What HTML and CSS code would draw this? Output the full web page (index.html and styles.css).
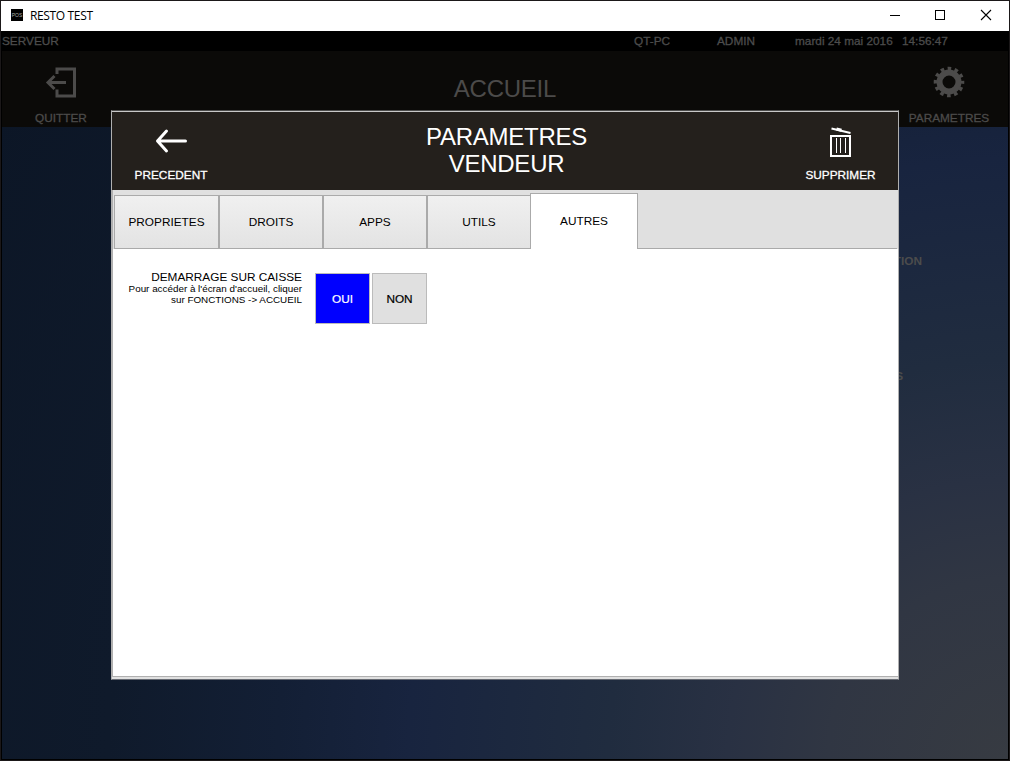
FILE: index.html
```html
<!DOCTYPE html>
<html lang="fr">
<head>
    <meta charset="UTF-8">
    <title>RESTO TEST</title>
    <link rel="stylesheet" href="styles.css">
</head>
<body>
<div class="window">
    <div class="titlebar">
        <div class="app-icon">POS</div>
        <div class="app-title">RESTO TEST</div>
        <svg class="controls" width="110" height="30" viewBox="0 0 110 30" fill="none" stroke="#000" shape-rendering="crispEdges">
            <path d="M0 14.5h10M45.5 9.5h9v9h-9z"/>
            <path d="M91 9l10 10M101 9l-10 10" shape-rendering="auto" stroke-width="1.1"/>
        </svg>
    </div>
    <div class="screen">
        <div class="statusbar">
            <span class="user">SERVEUR</span>
            <span class="host">QT-PC</span>
            <span class="role">ADMIN</span>
            <span class="date">mardi 24 mai 2016</span>
            <span class="time">14:56:47</span>
        </div>
        <div class="header">
            <div class="action">
                <svg width="32" height="32" viewBox="0 0 32 32" fill="none" stroke="#4c4b4a">
                    <path d="M12 8V3h17.500v27H12v-6.500" stroke-width="3"/>
                    <path d="M21 16.500H3M9.500 10L3 16.500 9.500 23" stroke-width="3"/>
                </svg>
                <span>QUITTER</span>
            </div>
            <h1>ACCUEIL</h1>
            <div class="action">
                <svg width="32" height="32" viewBox="-16 -16 32 32">
                    <circle r="9.500" fill="none" stroke="#4c4b4a" stroke-width="6"/>
                    <circle r="13.500" fill="none" stroke="#4c4b4a" stroke-width="3.600" stroke-dasharray="3.600 3.469" stroke-dashoffset="1.800"/>
                </svg>
                <span>PARAMETRES</span>
            </div>
        </div>
        <div class="desktop">
            <span class="tile-label tile-one">GESTION</span>
            <span class="tile-label tile-two">CLIENTS</span>
        </div>
    </div>

    <div class="dialog">
        <div class="dialog-header">
            <div class="action">
                <svg width="32" height="32" viewBox="0 0 32 32" fill="none" stroke="#fff" stroke-width="3">
                    <path d="M30.500 16H3M11.500 6L2.500 16l9 10" stroke-linejoin="round" stroke-linecap="round"/>
                </svg>
                <span>PRECEDENT</span>
            </div>
            <h2>PARAMETRES<br>VENDEUR</h2>
            <div class="action delete">
                <svg width="32" height="32" viewBox="0 0 32 32" fill="none" stroke="#fff">
                    <path d="M6.500 3.500l19 4.500" stroke-width="2"/>
                    <path d="M11.500 4l5 1.200" stroke-width="3"/>
                    <path d="M6 11h19v20H6z" stroke-width="2"/>
                    <path d="M11.500 13v15M15.500 13v15M20.500 13v15" stroke-width="1"/>
                </svg>
                <span>SUPPRIMER</span>
            </div>
        </div>
        <div class="tabs">
            <div class="tab">PROPRIETES</div>
            <div class="tab">DROITS</div>
            <div class="tab">APPS</div>
            <div class="tab">UTILS</div>
            <div class="tab active">AUTRES</div>
            <div class="tabs-rest"></div>
        </div>
        <div class="pane">
            <div class="label">
                <div class="label-title">DEMARRAGE SUR CAISSE</div>
                <div class="label-help">Pour accéder à l'écran d'accueil, cliquer<br>sur FONCTIONS -&gt; ACCUEIL</div>
            </div>
            <button class="choice selected">OUI</button>
            <button class="choice">NON</button>
        </div>
    </div>
</div>
</body>
</html>
```
FILE: styles.css
```css
* {
    box-sizing: border-box;
}
body {
    margin: 0;
    font-family: "Liberation Sans", Arial, sans-serif;
    font-size: 11.8px;
    overflow: hidden;
}
.window {
    position: relative;
    width: 1010px;
    height: 761px;
    border: 1px solid #1b1819;
    background: #000;
}
.titlebar {
    display: flex;
    align-items: center;
    height: 30px;
    padding: 0 9px 0 10px;
    background: #fff;
}
.app-icon {
    width: 12px;
    height: 12px;
    margin-top: -2px;
    background: #000;
    color: #aaa;
    font-size: 5px;
    line-height: 12px;
    text-align: center;
}
.app-title {
    margin-left: 7px;
    margin-top: -2px;
    font-family: "Open Sans", sans-serif;
    font-size: 12px;
    letter-spacing: -0.35px;
    color: #000;
}
.controls {
    margin-left: auto;
}
.screen {
    display: flex;
    flex-direction: column;
    height: 728px;
    padding: 0 1px;
}
.statusbar {
    display: flex;
    height: 20px;
    line-height: 20px;
    color: #4c4c4c;
    -webkit-text-stroke: 0.3px;
}
.user {
    width: 632px;
}
.host {
    width: 83px;
}
.role {
    width: 78px;
}
.date {
    width: 107px;
}
.header {
    display: flex;
    justify-content: space-between;
    height: 76px;
    background: #0b0a08;
    color: #4c4b4a;
}
.action {
    display: flex;
    flex-direction: column;
    align-items: center;
    justify-content: space-between;
    width: 118px;
    padding: 15px 0 2px;
    line-height: 14px;
    -webkit-text-stroke: 0.3px;
}
h1, h2 {
    margin: 0;
    font-size: 24px;
    font-weight: normal;
    letter-spacing: -0.25px;
    text-align: center;
}
h1 {
    line-height: 75px;
}
.desktop {
    position: relative;
    flex: 1;
    background: radial-gradient(circle at 100% 100%, #373b42 0, #303643 180px, #293143 280px, #202c3f 400px, #18243f 600px, #131f35 730px, #0f1a2b 900px, #0c1626 1200px);
}
.tile-label {
    position: absolute;
    right: 86px;
    font-weight: bold;
    color: #4c4c4c;
}
.tile-one {
    top: 127px;
}
.tile-two {
    top: 242px;
    right: 105px;
}
.dialog {
    position: absolute;
    left: 110px;
    top: 109px;
    display: flex;
    flex-direction: column;
    width: 788px;
    height: 570px;
    border: 1px solid #b0b0b0;
    border-top-color: #4c4c4b;
    border-bottom-color: #666a72;
    background: #e0e0e0;
    color: #000;
}
.dialog-header {
    display: flex;
    justify-content: space-between;
    height: 79px;
    border-top: 1px solid #c8c8c8;
    background: #24201c;
    color: #fff;
}
.dialog-header .action {
    padding-bottom: 8px;
    padding-top: 13px;
}
.dialog-header .delete {
    width: 115px;
}
h2 {
    padding-top: 11px;
    line-height: 27px;
}
.tabs {
    display: flex;
    align-items: flex-end;
    height: 59px;
    padding: 3px 1px 0 1px;
    border-left: 1px solid #b0b0b0;
}
.tab {
    width: 104px;
    height: 54px;
    border: 1px solid #aaa;
    background: linear-gradient(#f0f0f0, #e3e3e3);
    line-height: 52px;
    text-align: center;
}
.tab:first-child {
    width: 105px;
}
.tab.active {
    width: 108px;
    height: 56px;
    margin-left: -1px;
    border-bottom: 0;
    background: #fff;
    line-height: 54px;
}
.tabs-rest {
    flex: 1;
    border-bottom: 1px solid #aaa;
}
.pane {
    display: flex;
    align-items: flex-start;
    flex: 1;
    margin-bottom: 2px;
    padding: 24px 0 0 12px;
    border: solid #b0b0b0;
    border-width: 0 0 1px 1px;
    background: #fff;
}
.label {
    width: 177px;
    margin-top: -3px;
    margin-right: 13px;
    text-align: right;
}
.label-title {
    line-height: 15px;
}
.label-help {
    margin-top: -2px;
    font-size: 9.85px;
    line-height: 11px;
    white-space: nowrap;
}
.choice {
    width: 55px;
    height: 51px;
    margin-right: 2px;
    padding: 0;
    border: 1px solid #bbb;
    background: #e0e0e0;
    color: #000;
    font: 11.8px "Liberation Sans", Arial, sans-serif;
    -webkit-text-stroke: 0.2px;
}
.choice.selected {
    background: #00f;
    color: #fff;
}
```
